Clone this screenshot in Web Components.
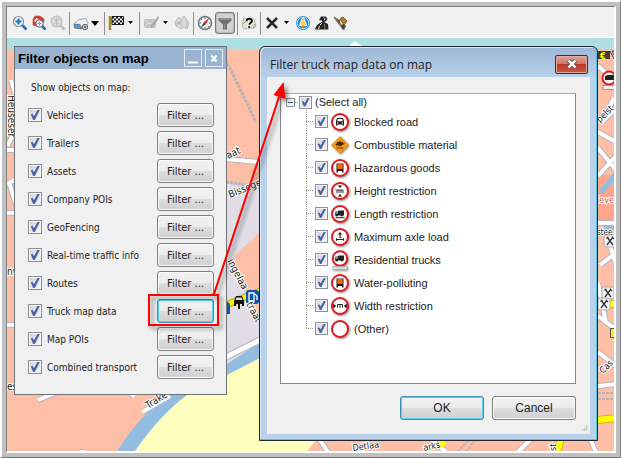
<!DOCTYPE html>
<html lang="en">
<head>
<meta charset="utf-8">
<title>Map filters</title>
<style>
html, body { height: 100%; margin: 0; background: #fff; }
body { font-family: "Liberation Sans", Arial, sans-serif; font-size: 12px; color: #222; }
</style>
</head>
<body>
<app-frame>
  <tool-bar slot="bar"></tool-bar>
  <map-canvas></map-canvas>
  <filter-panel></filter-panel>
  <truck-dialog></truck-dialog>
  <red-callout></red-callout>
</app-frame>

<script>
const define = (name, html) => customElements.define(name, class extends HTMLElement {
  constructor() {
    super();
    this.attachShadow({ mode: 'open' });
    this.shadowRoot.innerHTML = typeof html === 'function' ? '' : html;
  }
  connectedCallback() {
    if (typeof html === 'function') this.shadowRoot.innerHTML = html(this);
  }
});

const checkCss = `
input { appearance: none; flex: none; box-sizing: border-box; width: 13px; height: 13px; margin: 0;
  border: 1px solid #8e8f8f; background: linear-gradient(135deg, #cfd3da, #f6f6f6); box-shadow: inset 0 0 0 1px #f4f4f4; }
input:checked::before { content: ""; display: block; width: 9px; height: 9px; margin: 1px; background: #4a60a4;
  clip-path: polygon(8% 45%, 25% 38%, 40% 62%, 75% 0, 98% 0, 48% 100%, 32% 100%); }`;

/* ---------- push button ---------- */
define('push-button', `
<style>
:host { display: block; font-size: 12px; }
button { width: 100%; height: 24px; padding: 0; font: inherit; color: #222; border: 1px solid #808080; border-radius: 3px;
  background: linear-gradient(#f3f3f3, #ebebeb 50%, #dddddd 51%, #cfcfcf); box-shadow: inset 0 0 0 1px #fafafa; }
:host([focused]) button { border-color: #3c8fb5; box-shadow: inset 0 0 0 1px #5fd0f0; }
</style>
<button type="button"><slot></slot></button>`);

/* ---------- one row of the left panel ---------- */
define('filter-row', el => `
<style>
:host { display: flex; align-items: center; height: 28px; }
label { flex: 1; display: flex; align-items: center; gap: 5px; white-space: nowrap; }
${checkCss}
input { width: 14px; height: 14px; }
input:checked::before { width: 10px; height: 10px; }
push-button { width: 57px; font-size: 11px; }
</style>
<label><input type="checkbox" checked><slot></slot></label>
<push-button ${el.hasAttribute('focused') ? 'focused' : ''}>Filter ...</push-button>`);

define('filter-panel', `
<style>
:host { position: absolute; left: 7px; top: 8px; width: 213px; box-sizing: border-box; border: 1px solid #6f7478; background: #f0f0f0;
  font: 10px "DejaVu Sans Condensed", "Noto Sans", sans-serif; }
header { display: flex; align-items: center; gap: 3px; height: 22px; padding: 0 3px; background: #99b4d1; }
h2 { flex: 1; margin: 0; font: bold 13px "Liberation Sans", Arial, sans-serif; color: #000; white-space: nowrap; }
header button { width: 18px; height: 18px; padding: 0; border: 1px solid #e4ecf5; background: none; }
header svg { display: block; }
p { margin: 0; padding: 12px 16px 0; height: 20px; line-height: 14px; }
section { padding: 0 12px 13px 13px; }
</style>
<header>
  <h2>Filter objects on map</h2>
  <button type="button" aria-label="Minimize"><svg width="16" height="16"><path d="M3 12.5h10" stroke="#fff" stroke-width="2"/></svg></button>
  <button type="button" aria-label="Close"><svg width="16" height="16"><path d="M5.500 5.500l5 6M10.500 5.500l-5 6" stroke="#fff" stroke-width="2"/></svg></button>
</header>
<p>Show objects on map:</p>
<section>
  <filter-row>Vehicles</filter-row>
  <filter-row>Trailers</filter-row>
  <filter-row>Assets</filter-row>
  <filter-row>Company POIs</filter-row>
  <filter-row>GeoFencing</filter-row>
  <filter-row>Real-time traffic info</filter-row>
  <filter-row>Routes</filter-row>
  <filter-row focused>Truck map data</filter-row>
  <filter-row>Map POIs</filter-row>
  <filter-row>Combined transport</filter-row>
</section>`);

/* ---------- traffic sign glyphs ---------- */
const ring = '<circle cx="9" cy="9" r="8" fill="#fff" stroke="#e01a22" stroke-width="2"/>';
const truck = '<path d="M4.500 6.500h2.500l.5-1h5.500v5h-1a1.300 1.300 0 0 1-2.500 0h-2.500a1.300 1.300 0 0 1-2.500 0h-.5z" fill="#222"/><path d="M5.200 7.200h1.500v1.300h-1.500z" fill="#fff"/>';
const orange = ring + '<path d="M5.500 4.500h7v9h-1.500v-1.500h-4v1.500h-1.500z" fill="#2a1408"/><path d="M6.300 5h5.400v5h-5.400z" fill="#f0680c"/>';
const signs = {
  blocked: ring + '<path d="M6 5h6l1 3v4.500h-1.500v-1h-5v1h-1.500v-4.500z" fill="#222"/><path d="M6.700 6h4.600l.5 2.300h-5.600zM6 9.500h1.300v1h-1.300zM10.700 9.500h1.300v1h-1.300z" fill="#fff"/>',
  fire: '<path d="M9 .5l8.500 8.500-8.500 8.500-8.500-8.500z" fill="#f59a12" stroke="#d27c08" stroke-width=".6"/><path d="M4 8.500l2-1-.5-1.500 2 .5 1.500-2 1 2 2-1-.5 2 2.500-.5-1.500 1.500-2 .5.500 1.500-2-1-1 1-1-1.500-1.500 1-.5-1.500z" fill="#3d2205"/><path d="M5.500 12h7" stroke="#3d2205" stroke-width=".8"/>',
  hazard: orange,
  height: ring + '<path d="M7 3.600h4l-2 2.400zM7 14.400h4l-2-2.400z" fill="#111"/><path d="M6 11.300v-3.300h6v3.300M8 8v3M10 8v3M5 7.200v1" fill="none" stroke="#222" stroke-width=".9"/>',
  length: ring + truck + '<path d="M4.500 12.700h9" stroke="#222"/>',
  axle: ring + '<path d="M9 9.800v-5M7.500 6.500l1.500-1.700 1.500 1.700M5.500 11.500h7M5.500 10.200v2.600M12.500 10.200v2.600M8.500 9.500h2" fill="none" stroke="#222" stroke-width="1.100"/>',
  home: '<circle cx="9" cy="7.500" r="7.200" fill="#fff" stroke="#e01a22" stroke-width="2"/><g transform="translate(0 -1)">' + truck + '</g><path d="M2 15.500h14v3h-14z" fill="#f4f4f4" stroke="#aaa" stroke-width=".8"/><path d="M4 17h10" stroke="#999" stroke-width=".7"/>',
  water: orange,
  width: ring + '<path d="M2.200 6.800l3 2.200-3 2.200zM15.800 6.800l-3 2.200 3 2.200z" fill="#111"/><path d="M6.500 10.700v-3.200h5v3.200M9 7.500v3.200" fill="none" stroke="#222"/>',
  none: ring
};

define('tree-row', el => `
<style>
:host { display: flex; height: 23px; }
.branch { flex: none; width: 9px; background:
  repeating-linear-gradient(#999 0 1px, transparent 1px 2px) 0 0 / 1px 100% no-repeat,
  repeating-linear-gradient(90deg, #999 0 1px, transparent 1px 2px) 0 11px / 8px 1px no-repeat; }
:host([last]) .branch { background-size: 1px 12px, 8px 1px; }
label { display: flex; align-items: center; gap: 3px; white-space: nowrap; }
svg { overflow: visible; filter: drop-shadow(1px 1px 1px #888); }
span { margin-left: 2px; }
${checkCss}
</style>
<i class="branch"></i>
<label><input type="checkbox" checked><svg width="18" height="18" viewBox="0 0 18 18" aria-hidden="true">${signs[el.getAttribute('sign')]}</svg><span><slot></slot></span></label>`);

define('truck-dialog', `
<style>
:host { position: absolute; left: 252px; top: 8px; width: 339px; box-sizing: border-box; padding: 0 7px 6px;
  border: 1px solid #20272c; border-radius: 6px 6px 0 0; background: linear-gradient(#9db8d6, #b9d1ea 30px);
  box-shadow: inset -1px -1px 0 #4cc8e4, inset 1px 1px 0 #dbe8f5; font-size: 11px; }
header { display: flex; align-items: center; height: 30px; padding: 0 2px 0 3px; }
h2 { flex: 1; margin: 0; padding-top: 6px; font: 12px "Open Sans", "Noto Sans", sans-serif; line-height: 20px; color: #222; white-space: nowrap; }
header button { width: 33px; height: 19px; padding: 0; margin-top: 4px; border: 1px solid #5c1f1c; border-radius: 2px;
  background: linear-gradient(#dfa59b, #cf7466 48%, #b83a26 50%, #c9584a); box-shadow: inset 0 0 0 1px #e3aaa0; }
header svg { display: block; margin: auto; }
main { background: #f0f0f0; padding: 16px 14px 2px 13px; }
.tree { min-height: 289px; background: #fff; border: 1px solid #828790; border-top-color: #abadb3; }
.root { display: flex; align-items: center; height: 16px; padding-left: 5px; }
.root button { width: 9px; height: 9px; padding: 0; border: 1px solid #919191; background: linear-gradient(90deg, #3e5a9a, #3e5a9a) 1px 3px / 5px 1px no-repeat #f6f6f6; }
.root i { width: 4px; height: 1px; background: repeating-linear-gradient(90deg, #999 0 1px, transparent 1px 2px); }
.root label { display: flex; align-items: center; gap: 3px; white-space: nowrap; }
${checkCss}
.kids { padding-left: 25px; }
footer { display: flex; justify-content: flex-end; gap: 8px; padding-top: 12px; }
push-button { width: 84px; }
.grip { display: block; margin: 5px -12px 0 auto; }
</style>
<header>
  <h2>Filter truck map data on map</h2>
  <button type="button" aria-label="Close"><svg width="12" height="10" viewBox="0 0 12 10"><path d="M2.500 1.500l7 7M9.500 1.500l-7 7" stroke="#5b2622" stroke-width="4"/><path d="M2.500 1.500l7 7M9.500 1.500l-7 7" stroke="#fff" stroke-width="2.500"/></svg></button>
</header>
<main>
  <div class="tree">
    <div class="root"><button type="button" aria-label="Collapse" aria-expanded="true"></button><i></i><label><input type="checkbox" checked>(Select all)</label></div>
    <div class="kids">
      <tree-row sign="blocked">Blocked road</tree-row>
      <tree-row sign="fire">Combustible material</tree-row>
      <tree-row sign="hazard">Hazardous goods</tree-row>
      <tree-row sign="height">Height restriction</tree-row>
      <tree-row sign="length">Length restriction</tree-row>
      <tree-row sign="axle">Maximum axle load</tree-row>
      <tree-row sign="home">Residential trucks</tree-row>
      <tree-row sign="water">Water-polluting</tree-row>
      <tree-row sign="width">Width restriction</tree-row>
      <tree-row sign="none" last>(Other)</tree-row>
    </div>
  </div>
  <footer><push-button focused>OK</push-button><push-button>Cancel</push-button></footer>
  <svg class="grip" width="7" height="7"><path d="M5 1h1.500M3 3h1.500M5 3h1.500M1 5h1.500M3 5h1.500M5 5h1.500" stroke="#bbb" stroke-width="1.500"/></svg>
</main>`);

/* ---------- toolbar ---------- */
const tools = {
  zoomin: '<path d="M10 10l4.500 4.500" stroke="#2f66b0" stroke-width="2.500"/><circle cx="6.500" cy="6.500" r="5" fill="#f2f7fc" stroke="#8a9099" stroke-width="1.200"/><path d="M3.500 6.500h6M6.500 3.500v6" stroke="#1b6fc8" stroke-width="2"/>',
  zoommap: '<path d="M2 4l2-3 5 0 4 3 0 3-5-1-3 5-3-1z" fill="#d8342e" stroke="#b9504a" stroke-width=".6"/><path d="M3 6l2-3 3 1-2 4z" fill="#f6d8d2"/><path d="M10.500 10.500l4 4" stroke="#2f66b0" stroke-width="2.500"/><circle cx="8.500" cy="8.500" r="3.700" fill="#e6eef8" stroke="#666"/><path d="M8.500 6.500v4M6.500 8.500h4" stroke="#7aa3d4"/>',
  zoomoff: '<path d="M10 10l4.500 4.500" stroke="#c0c0c0" stroke-width="3"/><circle cx="6.500" cy="6.500" r="5.300" fill="#d9d9d9" stroke="#c2c2c2" stroke-width="1.400"/><path d="M4 4l5 5M9 4l-5 5M6.500 3v7" stroke="#bdbdbd"/>',
  truck: '<path d="M1 9l5-4.500 7-1 2 5-4 5z" fill="#eaf3fb" stroke="#9aa7b6"/><path d="M1 9l6 .5 2 4.500-7.500-1z" fill="#4d9bd2" stroke="#53606e" stroke-width=".7"/><circle cx="12" cy="12" r="2.700" fill="#d8dde2" stroke="#666"/><path d="M12 10.500v3M10.500 12h3" stroke="#666"/>',
  flag: '<path d="M2 1v14" stroke="#a08a2c" stroke-width="2.500"/><path d="M4 1.500h11.500v8h-11.500z" fill="#fff" stroke="#222"/><path d="M4 1.500h2v2h-2zM8 1.500h2v2h-2zM12 1.500h2v2h-2zM6 3.500h2v2h-2zM10 3.500h2v2h-2zM14 3.500h1.500v2h-1.500zM4 5.500h2v2h-2zM8 5.500h2v2h-2zM12 5.500h2v2h-2zM6 7.500h2v2h-2zM10 7.500h2v2h-2zM14 7.500h1.500v2h-1.500z" fill="#111"/>',
  mail: '<path d="M1 4h12v9h-12z" fill="#c2c2c2"/><path d="M1 4l6 5 6-5M1 13l4-5M13 13l-4-5" fill="none" stroke="#e6e6e6"/><path d="M15 1l-7 9-1 3 3-1 6-9z" fill="#aaa"/>',
  group: '<path d="M1 7l4-5 2 3 3-4 5 7-2 6-3-2-3 2-5-3z" fill="#cfcfcf" stroke="#bcbcbc"/><path d="M5 4v9M10 3v9" stroke="#e8e8e8"/><circle cx="5" cy="8" r="1.500" fill="#b2b2b2"/>',
  compass: '<circle cx="8" cy="8" r="6.500" fill="#f2f5f6" stroke="#737b80" stroke-width="1.500"/><path d="M12.500 3l-3.500 6-2-2z" fill="#d8281f"/><path d="M3.500 13l3.500-6 2 2z" fill="#444"/><path d="M8 2.500v1.500M8 12v1.500M2.500 8h1.500M12 8h1.500M4 4l1 1M11 11l1 1" stroke="#566"/>',
  filter: '<path d="M1.500 3h13v2.500l-4.500 4v5h-4v-5l-4.500-4z" fill="#6f6f6f"/><path d="M2.500 4h11" stroke="#9b9b9b" stroke-width="1.500"/><path d="M7.500 9v5" stroke="#909090"/>',
  mapq: '<path d="M1 8l2-5 3 1 3-2 4 2 2 7-3 3-4-2-3 2-3-1z" fill="#dde2e2" stroke="#a0a7a9" stroke-width=".8"/><path d="M2 9l3-3M12 13l2-4" stroke="#b95"/><path d="M5.500 6.200q0-2.500 2.700-2.500t2.700 2.300q0 1.200-1.500 2-1 .6-1 1.700M8.200 11.200v2" fill="none" stroke="#fff" stroke-width="3.500"/><path d="M5.500 6.200q0-2.500 2.700-2.500t2.700 2.300q0 1.200-1.500 2-1 .6-1 1.700M8.200 11.200v2" fill="none" stroke="#111" stroke-width="2"/>',
  cross: '<path d="M3 3l10 10M13 3l-10 10" stroke="#2c2c2c" stroke-width="2.500"/>',
  bell: '<circle cx="8" cy="8" r="7" fill="#2d8be0"/><circle cx="8" cy="8" r="5.800" fill="none" stroke="#a8d8f8"/><path d="M8 2.500q1.500 1 2.200 4l1.300 4h-7l1.300-4q.7-3 2.200-4z" fill="#ffd25a" stroke="#fff" stroke-width=".8"/><circle cx="8" cy="11.500" r="1.300" fill="#e88a14"/>',
  road: '<path d="M7 1.500h4q3 1 2 3.500-1 1.500-3 2l4 2 .5 5.500h-13.500q1-5 6-7 2-1 1-2l-3-.5z" fill="#262626"/><path d="M10 2.500q1.500 1 .5 2.500M8 8l-2 2M5.500 11l-1 3" stroke="#eee" fill="none"/><path d="M10.500 9l.5 5" stroke="#999" stroke-width=".8"/>',
  dig: '<path d="M1 2l6 3 1 6-3-3z" fill="#5e5a55"/><path d="M7 4l3-2 4 4-3 4z" fill="#c07a28" stroke="#7e5a2c"/><path d="M7 10l4-1 2 2-2 4-2-1z" fill="#4d4a46"/><path d="M1 2l7 9" stroke="#9a6a35" stroke-width="1.500"/>'
};
define('tool-button', el => {
  const drop = el.hasAttribute('drop');
  return `
<style>
:host { display: block; }
:host([pressed]) { margin: 0 -1px; }
button { display: flex; align-items: center; justify-content: space-between; width: ${drop ? 28 : 16}px; height: 20px; padding: 0 ${drop ? 2 : 0}px 0 0; border: 0; background: none; }
:host([pressed]) button { width: 20px; height: 22px; padding: 0 1px; border: 1px solid #777; border-radius: 3px; background: #d2d2d2; box-shadow: inset 0 0 2px #888; }
</style>
<button type="button" aria-label="${el.getAttribute('label')}">
<svg width="16" height="16" viewBox="0 0 16 16">${tools[el.getAttribute('icon')]}</svg>
${drop ? (el.getAttribute('drop') === 'big' ? '<svg width="8" height="5"><path d="M0 0h8l-4 5z"/></svg>' : '<svg width="7" height="4"><path d="M1 0h5l-2.500 3z"/></svg>') : ''}
</button>`;
});

define('tool-bar', `
<style>
:host { display: flex; align-items: center; gap: 3px; box-sizing: border-box; height: 31px; padding: 2px 5px 0; background: #f0f0f0; border-bottom: 1px solid #fff; }
hr { width: 1px; height: 23px; margin: 0; border: 0; background: #8f8f8f; }
</style>
<tool-button icon="zoomin" label="Zoom in"></tool-button>
<tool-button icon="zoommap" label="Zoom area"></tool-button>
<tool-button icon="zoomoff" label="Zoom selection"></tool-button>
<hr><tool-button icon="truck" label="Vehicles" drop="big"></tool-button>
<hr><tool-button icon="flag" label="Destination" drop></tool-button>
<hr><tool-button icon="mail" label="Message" drop></tool-button>
<tool-button icon="group" label="Groups"></tool-button>
<hr><tool-button icon="compass" label="Compass"></tool-button>
<tool-button icon="filter" label="Filter" pressed></tool-button>
<hr><tool-button icon="mapq" label="Map query"></tool-button>
<hr><tool-button icon="cross" label="Clear" drop></tool-button>
<tool-button icon="bell" label="Alerts"></tool-button>
<tool-button icon="road" label="Roads"></tool-button>
<tool-button icon="dig" label="Works"></tool-button>`);

/* ---------- map ---------- */
const food = (x, y) => `<g transform="translate(${x} ${y})"><rect width="12" height="12" rx="2" fill="#f6f6f6" stroke="#aaa"/><path d="M3 2l6 8M9 2l-6 8M2.500 3.500l2-1.500M8 2l2 2" stroke="#333" stroke-width="1.300"/></g>`;
define('map-canvas', `
<style>
:host { position: absolute; inset: 0; overflow: hidden; background: #ffbfa6; }
svg { display: block; width: 100%; height: 100%; }
text { font: 10px "DejaVu Sans Condensed", sans-serif; fill: #222; stroke: #fff; stroke-width: 2px; paint-order: stroke; }
.st { fill: none; stroke: #b9b4bb; stroke-width: 6; }
.sw { fill: none; stroke: #fff; stroke-width: 4; }
</style>
<svg><defs>
  <path id="streets" d="M11 80L16 96M7 150h10M7 146L16 130M7 184L16 179M9 182L16 205M7 213h9M7 325h10M38 400L60 391M130 391l4 6M142 412L170 396M226 159l34 3
    M598 66l18 16M598 132l18 10M600 124l16-16M598 148l18 22M598 176l18-20M614 98l-6 12M598 223h18M600 265l16-12M608 240l8 24M598 283l8 40M598 352l18 14M598 386l18-2M598 316l16 12M590 438l6 14M320 440l8 12M518 452l14-14M430 438l16 14M80 452h6"/>
  </defs>
  <g transform="translate(-7 -38)">
    <path d="M226 183l34 7v160l-34 20z" fill="#e0dde6"/>
    <path d="M260 232l-31 29 31 58z" fill="#ffbfa6"/>
    <path d="M187 395L227 372 260 350V441h55l-8 10 H135Q155 415 187 395z" fill="#ffffbd"/>
    <path d="M307 451l10-12h-60v12z" fill="#ffffbd"/>
    <path d="M117 451Q138 418 168 393Q200 375 227 364L262 341V357L227 375Q205 385 187 395Q160 415 135 451z" fill="#92bde0"/>
    <path d="M226 357l34-17" stroke="#b9b4bb" stroke-width="7"/><path d="M226 357l34-17" stroke="#fff" stroke-width="5"/>
    <path d="M598 175h18v45h-18z" fill="#ffa58c"/>
    <path d="M598 192l16-20h3v6l-14 16z" fill="#92bde0"/>
    <path d="M604 226h12v4h-12z" fill="#92bde0"/>
    <path d="M226 60l30 62M226 182l34 5" stroke="#b7b3b6" stroke-width="3" stroke-dasharray="3 1" fill="none"/>
    <use href="#streets" class="st"/><use href="#streets" class="sw"/>
    <path d="M598 393h18M598 399h18M458 452l12-14M466 452l10-14" stroke="#b7b3b6" stroke-width="2" stroke-dasharray="3 1"/>
    <path d="M598 420l18-2M557 452l4-14M608 305l8-2" stroke="#c9b820" stroke-width="8"/><path d="M598 420l18-2M557 452l4-14M608 305l8-2" stroke="#ffff00" stroke-width="6"/>
    <path d="M7 38h609v12H7z" fill="#afdfe3"/><path d="M349 46l6-5 7 5z" fill="#fff"/>
    <path d="M226 305l34-14" stroke="#b5a92b" stroke-width="7"/><path d="M226 305l34-14" stroke="#ffee00" stroke-width="5"/>
    <path d="M222 302q8-2 8 4v8h-8z" fill="#0b57a8"/>
    <path d="M234 301l2-5h6l2 5v5h-2v-2h-6v2h-2zM238 304h2v5h-2z" fill="#111"/><path d="M236.500 297.500h5l1 2.500h-7z" fill="#ddd"/>
    <rect x="246" y="290" width="13" height="14" rx="3" fill="#0b57a8"/><path d="M249 293h5v8h-5zM255 294l2 2v4" fill="none" stroke="#fff" stroke-width="1.300"/>
    <text transform="translate(228 159) rotate(-25)">aat</text>
    <text transform="translate(230 198) rotate(-22)">Bissege</text>
    <text transform="translate(227 261) rotate(62)">ingelaa</text>
    <text transform="translate(246 304) rotate(62)">traat</text>
    <text transform="translate(8 95) rotate(90)">Heuseser</text>
    <text x="7" y="275">nw</text>
    <text x="7" y="390">es</text>
    <text transform="translate(148 409) rotate(-32)">Trake</text>
    <text transform="translate(353 451) rotate(-8)" style="font-size:9px">Detlaa</text>
    <text transform="translate(424 451) rotate(-12)" style="font-size:9px">arks</text>
    <text transform="translate(556 451) rotate(-90)" style="font-size:9px">st</text>
    <path d="M440 440l4 4M441 447l4-5" stroke="#ff0" stroke-width="4"/>
    <rect x="597" y="51" width="13" height="8" fill="#3c3c3c"/><text x="600" y="59" style="font-size:9px;font-weight:bold;fill:#ff0;stroke:none">€</text>
    <path d="M610 51l4 8M612 51h4l-2 4z" stroke="#444" fill="#ff0"/>
    <circle cx="609" cy="78" r="6.500" fill="#fff" stroke="#e01a22" stroke-width="2"/><path d="M605 76l3-1h6v5h-9z" fill="#222"/><path d="M603 85.500h14v4h-14z" fill="#eee" stroke="#999"/>
    <text transform="translate(600 123) rotate(-45)" style="font-size:9px">pelst</text>
    <text x="597" y="203" style="fill:#bb5a44;font-size:9px">ieve</text>
    <text x="597" y="235" style="font-size:8px">stee</text>
    ${food(604, 235)}${food(602, 287)}${food(598, 298)}
    <rect x="610.500" y="328.500" width="6" height="9" fill="#fff200" stroke="#555"/>
    <text transform="translate(603 374) rotate(-45)" style="font-size:9px">Cas</text>
  </g>
</svg>`);

/* ---------- red marker and arrow ---------- */
define('red-callout', `
<style>
:host { position: absolute; inset: 0; pointer-events: none; }
svg { display: block; width: 100%; height: 100%; filter: drop-shadow(3px 3px 2px rgba(0,0,0,.45)); }
</style>
<svg aria-hidden="true"><g transform="translate(-7 -38)">
  <rect x="149" y="295" width="69" height="30" fill="none" stroke="#fe0000" stroke-width="2"/>
  <path d="M214 294L279 97" stroke="#fe0000" stroke-width="2"/><path d="M283.500 82l2 17-12-4z" fill="#fe0000"/>
</g></svg>`);

/* ---------- bevelled window frame ---------- */
define('app-frame', `
<style>
:host { display: block; box-sizing: border-box; height: 100vh; border: solid; border-width: 2px 1px 1px 2px; border-color: #fff #808080 #707070 #fff; }
.mid { box-sizing: border-box; height: 100%; border: 4px solid #c0c0c0; }
.in { box-sizing: border-box; height: 100%; display: flex; flex-direction: column; border: solid; border-width: 1px 2px 2px 1px; border-color: #808080 #fff #fff #808080; }
.stage { position: relative; flex: 1; overflow: hidden; }
</style>
<div class="mid"><div class="in"><slot name="bar"></slot><div class="stage"><slot></slot></div></div></div>`);
</script>
</body>
</html>
